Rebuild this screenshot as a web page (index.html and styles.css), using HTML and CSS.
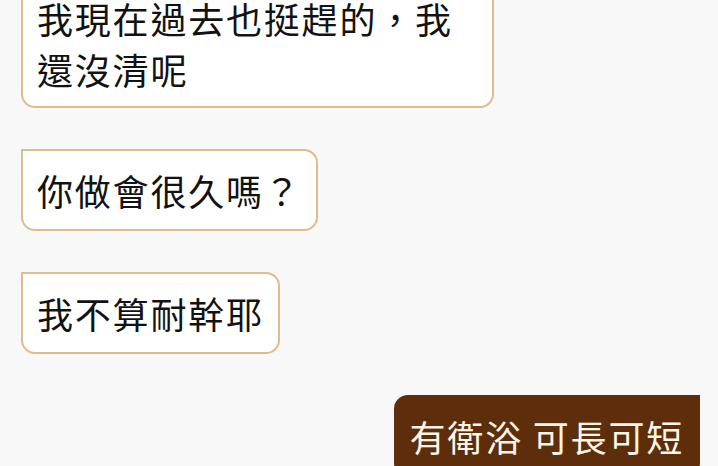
FILE: index.html
```html
<!doctype html>
<html>
<head>
  <meta charset="utf-8">
  <title>Chat</title>
  <link rel="stylesheet" href="styles.css">
</head>
<body>
  <div class="chat">
    <div class="row them">
      <div class="bubble">我現在過去也挺趕的，我還沒清呢</div>
    </div>
    <div class="row them">
      <div class="bubble">你做會很久嗎？</div>
    </div>
    <div class="row them">
      <div class="bubble">我不算耐幹耶</div>
    </div>
    <div class="row me">
      <div class="bubble">有衛浴 可長可短</div>
    </div>
  </div>
</body>
</html>
```

FILE: styles.css
```css
body {
  margin: 0;
  height: 100vh;
  overflow: hidden;
  background: #f8f8f8;
  font-family: "Noto Sans CJK TC", "Noto Sans", sans-serif;
  --border-color: #dfbc8c;
  --brown: #5e2d0b;
}

.chat {
  display: flex;
  flex-direction: column;
  gap: 41px;
  padding: 0 18px 0 21px;
  /* list is scrolled a little past the top */
  margin-top: -20px;
}

.row {
  display: flex;
}

.row.me {
  justify-content: flex-end;
}

.bubble {
  box-sizing: border-box;
  display: flex;
  align-items: center;
  max-width: 473px;
  min-height: 82px;
  padding: 11px 14px;
  border: 2px solid var(--border-color);
  font-size: 36px;
  line-height: 51px;
  letter-spacing: 1.8px;
}

.them .bubble {
  background: #fff;
  color: #121212;
  border-radius: 0 14px 14px 14px;
}

.me .bubble {
  background: var(--brown);
  border-color: var(--brown);
  color: #fff6e8;
  border-radius: 14px 0 14px 14px;
}
```
